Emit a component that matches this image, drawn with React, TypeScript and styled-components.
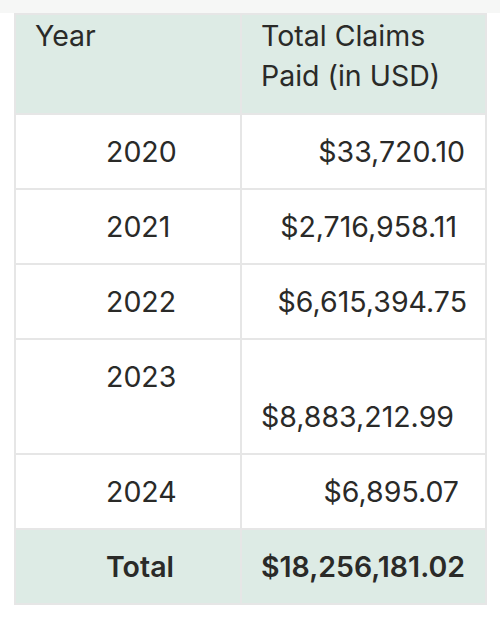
import React from "react";
import styled, { createGlobalStyle } from "styled-components";

const Global = createGlobalStyle`
  html, body { margin: 0; padding: 0; background: #ffffff; }
  body { font-family: Inter, "Noto Sans", sans-serif; color: #2a2a28; }
`;

const TopStrip = styled.div`
  height: 13px;
  background: #f6f7f6;
`;

const Wrap = styled.div`
  padding: 0 14px;
`;

const Table = styled.table`
  width: 471px;
  border-collapse: collapse;
  table-layout: fixed;
  font-size: 28.5px;
  line-height: 40px;
  border: 2px solid #e6e6e6;
`;

const HeadRow = styled.tr`
  background: #ddebe5;
`;

const HeadCell = styled.th`
  text-align: left;
  font-weight: 400;
  vertical-align: top;
  padding: 1px 18px 17px 19px;
  border-right: 2px solid #e6e6e6;
  border-bottom: 2px solid #e6e6e6;
`;

const Row = styled.tr<{ $total?: boolean }>`
  background: ${(p) => (p.$total ? "#ddebe5" : "#ffffff")};
  font-weight: ${(p) => (p.$total ? 600 : 400)};
`;

const YearCell = styled.td`
  vertical-align: top;
  padding: 17px 0 16px 90px;
  border-right: 2px solid #e6e6e6;
  border-bottom: 2px solid #e6e6e6;
`;

const AmountCell = styled.td<{ $inset: number }>`
  vertical-align: top;
  text-align: right;
  padding: 17px ${(p) => p.$inset}px 16px 0;
  border-bottom: 2px solid #e6e6e6;
  white-space: nowrap;
`;

const rows = [
  { year: "2020", amount: "$33,720.10", inset: 20, extraLine: false },
  { year: "2021", amount: "$2,716,958.11", inset: 28, extraLine: false },
  { year: "2022", amount: "$6,615,394.75", inset: 18, extraLine: false },
  { year: "2023", amount: "$8,883,212.99", inset: 31, extraLine: true },
  { year: "2024", amount: "$6,895.07", inset: 26, extraLine: false },
];

export default function App() {
  return (
    <>
      <Global />
      <TopStrip />
      <Wrap>
        <Table>
          <colgroup>
            <col style={{ width: 226 }} />
            <col style={{ width: 245 }} />
          </colgroup>
          <thead>
            <HeadRow>
              <HeadCell>Year</HeadCell>
              <HeadCell>
                Total Claims
                <br />
                Paid (in USD)
              </HeadCell>
            </HeadRow>
          </thead>
          <tbody>
            {rows.map((r) => (
              <Row key={r.year}>
                <YearCell>{r.year}</YearCell>
                <AmountCell $inset={r.inset}>
                  {r.extraLine && <br />}
                  {r.amount}
                </AmountCell>
              </Row>
            ))}
            <Row $total>
              <YearCell>Total</YearCell>
              <AmountCell $inset={20}>$18,256,181.02</AmountCell>
            </Row>
          </tbody>
        </Table>
      </Wrap>
    </>
  );
}
